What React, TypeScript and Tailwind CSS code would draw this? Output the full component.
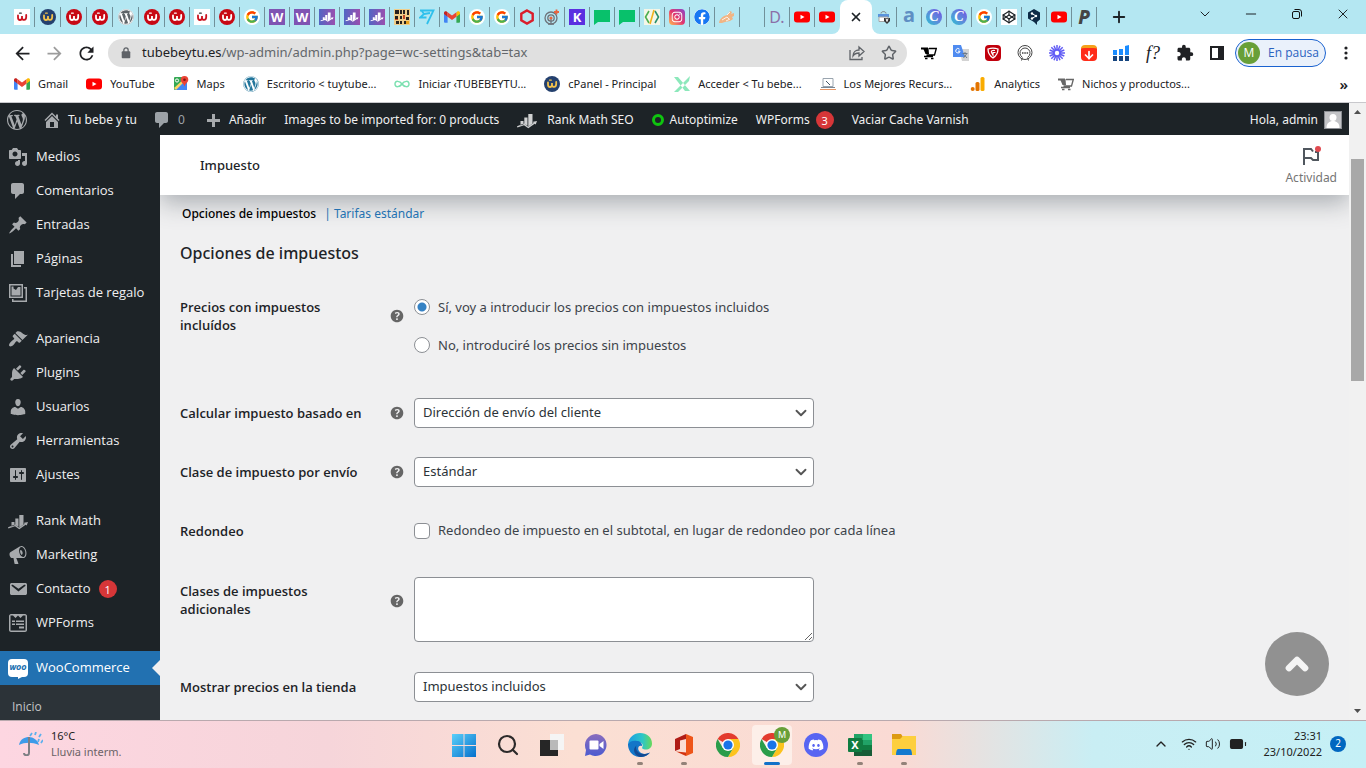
import type { ReactNode } from "react";
import { FcGoogle } from "react-icons/fc";
import { FaDiscord, FaFacebook, FaWordpress, FaInstagram } from "react-icons/fa";
import { MdArrowBack, MdArrowForward, MdExtension, MdRefresh } from "react-icons/md";
import { ArrowDown, BatteryFull, ChevronDown, ChevronUp, Codepen, Minus, Plus, Search, Star, Volume2, Wifi, X } from "lucide-react";

const dash = {
  wordpress:
    "M20 10c0-5.51-4.49-10-10-10C4.48 0 0 4.49 0 10c0 5.52 4.48 10 10 10 5.51 0 10-4.48 10-10zM7.78 15.37L4.37 6.22c.55-.02 1.17-.08 1.17-.08.5-.06.44-1.13-.06-1.11 0 0-1.45.11-2.37.11-.18 0-.37 0-.58-.01C4.12 2.69 6.87 1.11 10 1.11c2.33 0 4.45.87 6.05 2.34-.68-.11-1.65.39-1.65 1.58 0 .74.45 1.36.9 2.1.35.61.55 1.36.55 2.46 0 1.49-1.4 5-1.4 5l-3.03-8.37c.54-.02.82-.17.82-.17.5-.05.44-1.25-.06-1.22 0 0-1.44.12-2.38.12-.87 0-2.33-.12-2.33-.12-.5-.03-.56 1.2-.06 1.22l.92.08 1.26 3.41zM17.41 10c.24-.64.74-1.87.43-4.25.7 1.29 1.05 2.71 1.05 4.25 0 3.29-1.73 6.24-4.4 7.78.97-2.59 1.94-5.2 2.92-7.78zM6.1 18.09C3.12 16.65 1.11 13.53 1.11 10c0-1.3.23-2.48.72-3.59C3.25 10.3 4.67 14.2 6.1 18.09zm4.03-6.63l2.58 6.98c-.86.29-1.76.45-2.71.45-.79 0-1.57-.11-2.29-.33.81-2.38 1.62-4.74 2.42-7.1z",
  home: "M16 8.5l1.53 1.53-1.06 1.06L10 4.6l-6.47 6.49-1.06-1.06L10 2.5l4 4v-2h2v4zm-6-2.46l6 5.99V18H4v-5.97zM12 17v-5H8v5h4z",
  comments: "M5 2h9c1.1 0 2 .9 2 2v7c0 1.1-.9 2-2 2h-2l-5 5v-5H5c-1.1 0-2-.9-2-2V4c0-1.1.9-2 2-2z",
  plus: "M17 9v3h-5v5H9v-5H4V9h5V4h3v5h5z",
  media:
    "M13 11V4c0-.55-.45-1-1-1h-1.67L9 1H5L3.67 3H2c-.55 0-1 .45-1 1v7c0 .55.45 1 1 1h10c.55 0 1-.45 1-1zM7 4.5c1.38 0 2.5 1.12 2.5 2.5S8.38 9.5 7 9.5 4.5 8.38 4.5 7 5.62 4.5 7 4.5zM14 6h5v10.5c0 1.38-1.12 2.5-2.5 2.5S14 17.88 14 16.5s1.12-2.5 2.5-2.5c.17 0 .34.02.5.05V9h-3V6zm-4 8.05V13h2v3.5c0 1.38-1.12 2.5-2.5 2.5S7 17.88 7 16.5 8.12 14 9.5 14c.17 0 .34.02.5.05z",
  post: "M10.44 3.02l1.82-1.82 6.36 6.35-1.83 1.82c-1.05-.68-2.48-.57-3.41.36l-.75.75c-.92.93-1.04 2.35-.35 3.41l-1.83 1.82-2.41-2.41-2.8 2.79c-.42.42-3.38 2.71-3.8 2.29s1.86-3.39 2.28-3.81l2.79-2.79L4.1 9.36l1.83-1.82c1.05.69 2.48.57 3.4-.36l.75-.75c.93-.92 1.05-2.35.36-3.41z",
  page: "M6 15V2h10v13H6zm-1 1h8v2H3V5h2v11z",
  gallery: "M1 1h14v14H1zm1.500 1.500v11h11v-11zM3.500 3.500h2v2l2.500 1.500 2-3h2.500v8.500h-9zM16 4h3v15H4v-3h1.500v1.500h12v-12H16z",
  appearance:
    "M14.48 11.06L7.41 3.99l1.5-1.5c.5-.56 2.3-.47 3.51.32 1.21.8 1.43 1.28 2.91 2.1 1.18.64 2.45 1.26 4.45.85zm-.71.71L6.7 4.7 4.93 6.47c-.39.39-.39 1.02 0 1.41l1.06 1.06c.39.39.39 1.03 0 1.42-.6.6-1.43 1.11-2.21 1.69-.35.26-.7.53-1.01.84C1.43 14.23.4 16.08 1.4 17.07c.99 1 2.84-.03 4.18-1.36.31-.31.58-.66.85-1.02.57-.78 1.08-1.61 1.69-2.21.39-.39 1.02-.39 1.41 0l1.06 1.06c.39.39 1.02.39 1.41 0z",
  plugins:
    "M13.11 4.36L9.87 7.6 8 5.73l3.24-3.24c.35-.34 1.05-.2 1.56.32.52.51.66 1.21.31 1.55zm-8 1.77l.91-1.12 9.01 9.01-1.19.84c-.71.71-2.63 1.16-3.82 1.16H6.14L4.9 17.26c-.59.59-1.54.59-2.12 0-.59-.58-.59-1.53 0-2.12l1.24-1.24v-3.88c0-1.13.4-3.19 1.09-3.89zm7.26 3.97l3.24-3.24c.34-.35 1.04-.21 1.55.31.52.51.66 1.21.31 1.55l-3.24 3.25z",
  users:
    "M10 9.25c-2.27 0-2.73-3.44-2.73-3.44C7 4.02 7.82 2 9.97 2c2.16 0 2.98 2.02 2.71 3.81 0 0-.41 3.44-2.68 3.44zm0 2.57L12.72 10c2.39 0 4.52 2.33 4.52 4.53v2.49s-3.65 1.13-7.24 1.13c-3.65 0-7.24-1.13-7.24-1.13v-2.49c0-2.25 1.94-4.48 4.47-4.48z",
  tools:
    "M16.68 9.77c-1.34 1.34-3.3 1.67-4.95.99l-5.41 6.52c-.99.99-2.59.99-3.58 0s-.99-2.59 0-3.57l6.52-5.42c-.68-1.65-.35-3.61.99-4.95 1.28-1.28 3.12-1.62 4.72-1.06l-2.89 2.89 2.82 2.82 2.86-2.87c.53 1.58.18 3.39-1.08 4.65zM3.81 16.21c.4.39 1.04.39 1.43 0 .4-.4.4-1.04 0-1.43-.39-.4-1.03-.4-1.43 0-.39.39-.39 1.03 0 1.43z",
  settings:
    "M18 16V4c0-.55-.45-1-1-1H3c-.55 0-1 .45-1 1v12c0 .55.45 1 1 1h14c.55 0 1-.45 1-1zM8 11h1c.55 0 1 .45 1 1s-.45 1-1 1H8v1.5c0 .28-.22.5-.5.5s-.5-.22-.5-.5V13H6c-.55 0-1-.45-1-1s.45-1 1-1h1V5.5c0-.28.22-.5.5-.5s.5.22.5.5V11zm5-2h-1c-.55 0-1-.45-1-1s.45-1 1-1h1V5.500c0-.28.22-.5.5-.5s.5.22.5.5V7h1c.55 0 1 .45 1 1s-.45 1-1 1h-1v5.500c0 .28-.22.5-.5.5s-.5-.22-.5-.5V9z",
  rank: "M3.500 11h3v3.200l-3 1.400zM7.300 7.500h3.200v8.200l-3.200-1.900zM11.300 4h4.200v9.500l-4.200 2.900zM0 16.200l7-2.700 4.200 3.200 5.300-3.800-.5-1.100 4-.8-1.300 3.600-1-.9-6.400 4.500L7 15.200.4 17.400z",
  megaphone:
    "M18.150 5.940c.46 1.620.38 3.220-.02 4.480-.42 1.280-1.260 2.180-2.300 2.480-.16.06-.26.06-.4.06-.06.02-.12.02-.18.02-.06.02-.14.02-.22.02h-6.800l2.220 5.500c.02.14-.06.26-.14.34-.08.1-.24.16-.34.16H6.950c-.1 0-.26-.06-.34-.16-.08-.08-.16-.2-.14-.34l-1-5.500H4.250c-.5.06-1.080-.18-1.540-.62s-.88-1.080-1.060-1.880c-.24-.8-.2-1.560-.02-2.200.18-.62.58-1.080 1.060-1.300l9-5.400c.3-.2.6-.36.98-.46 1.040-.3 2.240.1 3.220.98s1.840 2.200 2.260 3.820zM15.570 11.900c1.500-.5 2.200-2.900 1.600-5.700-.6-2.700-2.600-4.600-4.200-4.100-1.600.4-2.300 3-1.600 5.700.7 2.700 2.600 4.600 4.200 4.100zM12.300 5c.9-.2 1.800.7 2.200 2.100s.1 2.500-.9 2.900c-.6-.6-1-1.300-1.300-2.300-.3-1-.3-1.900 0-2.700z",
  email:
    "M3.87 4h13.25C18.37 4 19 4.59 19 5.79v8.42c0 1.19-.63 1.79-1.88 1.79H3.87c-1.25 0-1.88-.6-1.88-1.79V5.79c0-1.2.63-1.79 1.88-1.79zm6.62 8.6l6.74-5.53c.24-.2.43-.66.13-1.07-.29-.41-.82-.42-1.17-.17l-5.7 3.86L4.8 5.83c-.35-.25-.88-.24-1.17.17-.3.41-.11.87.13 1.07z",
  forms:
    "M3 1h14c1 0 2 1 2 2v14c0 1-1 2-2 2H3c-1 0-2-1-2-2V3c0-1 1-2 2-2zm-.5 1.500v15h15v-15h-2.500L12.500 5 10 2.500 7.500 5 5 2.500zM4 7.500h3V9H4zM8 7.500h8V9H8zM4 10.500h3V12H4zM8 10.500h8V12H8zM11 13.500h5V15.500h-5z",
  help: "M17 10c0-3.87-3.14-7-7-7-3.87 0-7 3.13-7 7s3.13 7 7 7c3.86 0 7-3.13 7-7zm-6.3 1.48H9.14v-.43c0-.38.08-.7.24-.98s.46-.57.88-.89c.41-.29.68-.53.81-.71.14-.18.2-.39.2-.62 0-.25-.09-.44-.28-.58-.19-.13-.45-.19-.79-.19-.58 0-1.25.19-2 .57l-.64-1.28c.87-.49 1.8-.74 2.77-.74.81 0 1.45.2 1.92.58.48.39.71.91.71 1.55 0 .43-.09.8-.29 1.11-.19.32-.57.67-1.11 1.06-.38.28-.61.49-.71.63-.1.15-.15.34-.15.57v.35zm-1.47 2.74c-.18-.17-.27-.42-.27-.73 0-.33.08-.58.26-.75s.43-.25.77-.25c.32 0 .57.09.75.26s.27.42.27.74c0 .3-.09.55-.27.72-.18.18-.43.27-.75.27-.33 0-.58-.09-.76-.26z",
};

type DashName = keyof typeof dash;

function Dash({ name, className = "size-5" }: { name: DashName; className?: string }) {
  return (
    <svg viewBox="0 0 20 20" className={`shrink-0 ${className}`} fill="currentColor" fillRule="evenodd" aria-hidden="true">
      <path d={dash[name]} />
    </svg>
  );
}

/* ---------- site icons ---------- */

function Badge({ className, children }: { className: string; children: ReactNode }) {
  return <span className={`flex size-4 shrink-0 items-center justify-center leading-none ${className}`}>{children}</span>;
}

function WebMark({ dot }: { dot?: string }) {
  return (
    <svg viewBox="0 0 16 16" className="size-4" fill="none" stroke="currentColor" strokeWidth="1.800" strokeLinecap="round">
      <path d="M4 6.500v2c0 3.300 4 3.300 4 0V7v1.500c0 3.300 4.200 3.300 4.200-.5V6" />
      <path d="M5.500 4.200h1.800" stroke={dot ?? "currentColor"} strokeWidth="1.200" />
    </svg>
  );
}

const WebRed = () => (
  <Badge className="rounded-full bg-[#c80814] text-white">
    <WebMark />
  </Badge>
);
const WebNavy = () => (
  <Badge className="rounded-full bg-[#24406e] text-[#f3c14b]">
    <WebMark />
  </Badge>
);
const WebWhite = () => (
  <Badge className="bg-white text-[#cc1420]">
    <WebMark dot="#333" />
  </Badge>
);
const Elementor = () => <Badge className="bg-[#7f54b3] text-[13px] font-bold text-white">W</Badge>;
const Google = () => (
  <Badge className="rounded-full bg-white">
    <FcGoogle className="size-3.5" />
  </Badge>
);
const Youtube = () => (
  <svg viewBox="0 0 16 16" className="size-4 shrink-0">
    <rect y="2.500" width="16" height="11" rx="3" fill="#f00" />
    <path d="M6.500 5.700v4.600L10.500 8z" fill="#fff" />
  </svg>
);
const Gmail = () => (
  <svg viewBox="0 0 16 16" className="size-4 shrink-0">
    <path d="M0 4v8.500c0 .8.500 1.300 1.200 1.300h2.400V7z" fill="#4285f4" />
    <path d="M16 4v8.500c0 .8-.5 1.300-1.200 1.300h-2.400V7z" fill="#34a853" />
    <path d="M12.400 3.500V7.700L16 5V4c0-1.600-1.600-2.300-2.700-1.400z" fill="#fbbc04" />
    <path d="M0 4v1l3.600 2.700V3.500l-.9-.9C1.600 1.700 0 2.400 0 4z" fill="#c5221f" />
    <path d="M3.600 7.700V3.300L8 6.600l4.400-3.300v4.400L8 11z" fill="#ea4335" />
  </svg>
);
const RankPurple = () => (
  <svg viewBox="0 0 16 16" className="size-4">
    <defs>
      <linearGradient id="rankbg">
        <stop stopColor="#5266c4" />
        <stop offset="1" stopColor="#9a4fae" />
      </linearGradient>
    </defs>
    <rect width="16" height="16" fill="url(#rankbg)" />
    <path d={dash.rank} transform="translate(1.500 1) scale(.65)" fill="#fff" />
  </svg>
);
const Mosaic = () => (
  <svg viewBox="0 0 16 16" className="size-4">
    <rect width="16" height="16" fill="#f0ce8a" />
    <path d="M1 1h4v4H1zM6 1h2v4H6zM9 1h2v4H9zM13 1h2v5h-2zM1 7h3v3H1zM6 7h2v3H6zM12 8h3v3h-3zM2 12h3v3H2zM6 12h2v3H6zM10 12h2v3h-2z" fill="#27221f" />
    <path d="M9 6h2v4H9zM1 10h3v1H1z" fill="#c44822" />
    <path d="M12 12h3v3h-3z" fill="#e7a21e" />
  </svg>
);
const Wise = () => (
  <svg viewBox="0 0 16 16" className="size-4">
    <path d="M1 1.500h13.500L8 15M2.500 1.500 5 5 1 8.500h6.500M5 5l6-1" stroke="#2fc0ec" strokeWidth="1.800" fill="none" />
  </svg>
);
const Hexagon = () => (
  <svg viewBox="0 0 16 16" className="size-4">
    <path d="M8 1.500 13.700 4.700v6.600L8 14.500 2.300 11.300V4.700z" fill="none" stroke="#da1e2c" strokeWidth="2.400" />
  </svg>
);
const Target = () => (
  <svg viewBox="0 0 16 16" className="size-4" fill="none" stroke="#6d747b" strokeWidth="1.300">
    <circle cx="7" cy="9" r="6" />
    <circle cx="7" cy="9" r="3.200" />
    <path d="M4 15h6M7 9v5" />
    <circle cx="7" cy="9" r="1.600" fill="#e8643f" stroke="none" />
    <path d="M10 3h5M12.500.5v5" stroke="#e8643f" strokeWidth="1.800" />
  </svg>
);
const Chat = () => (
  <svg viewBox="0 0 16 16" className="size-4">
    <path d="M0 1h16v12H4l-4 3z" fill="#08c16b" />
  </svg>
);
const Brackets = () => (
  <svg viewBox="0 0 16 16" className="size-4" fill="none" strokeWidth="1.600">
    <rect width="16" height="16" fill="#f4f6e8" />
    <path d="M5 2 1.500 8 5 14" stroke="#4caf50" />
    <path d="M10 1 6 15" stroke="#f2b21b" />
    <path d="M11 2l3.500 6L11 14" stroke="#2c8f6b" />
  </svg>
);
const Insta = () => (
  <span className="flex size-4 items-center justify-center rounded-sm bg-linear-to-tr from-[#fdb74a] via-[#e1306c] to-[#8a3ac8]">
    <FaInstagram className="size-3 text-white" />
  </span>
);
const Hands = () => (
  <svg viewBox="0 0 16 16" className="size-4">
    <path d="M0 14c0-3 2-5 5-7l3-1 3-4 2 1-1 2 3-1v3l-2 1 1 2-3 2-5 1-3 1z" fill="#f1b584" />
    <path d="M8 6l3-3M3 11l5-3 2 2M7 12l4-2" stroke="#fbf1e8" fill="none" />
  </svg>
);
const Shop = () => (
  <svg viewBox="0 0 16 16" className="size-4">
    <path d="M5 4.500c0-2.500 5-2.500 5 0" stroke="#777" fill="none" />
    <path d="M2 5h11v3H2z" fill="#5a94dc" />
    <path d="M3 8h9v4.500H3z" fill="#fff" stroke="#a5a5a5" />
    <path d="M8 9h6v3l-3 3-3-3z" fill="#333" />
    <path d="M10 9.500l1 3 1-3" stroke="#fff" fill="none" />
  </svg>
);
const Canva = () => (
  <Badge className="rounded-full bg-linear-to-tr from-[#13bfd0] to-[#7048e2] font-[Liberation_Serif,serif] text-[14px] font-bold italic text-white">
    C
  </Badge>
);
const DeepL = () => (
  <svg viewBox="0 0 16 16" className="size-4">
    <path d="M8 0l6 3.500v7L11 13v3l-3-3-6-3.500v-6z" fill="#0f2b46" />
    <path d="M6 4.500l4 2.500L6 9.500" stroke="#fff" fill="none" />
    <circle cx="6" cy="4.500" r="1.200" fill="#fff" />
    <circle cx="10" cy="7" r="1.200" fill="#fff" />
    <circle cx="6" cy="9.500" r="1.200" fill="#fff" />
  </svg>
);
const Cart = ({ tone }: { tone: string }) => (
  <svg viewBox="0 0 16 16" className={`size-4 shrink-0 ${tone}`} fill="none" stroke="currentColor">
    <path d="M0 3.500h7" strokeWidth="2" />
    <path d="M2 3h5.500l.5 6H4.500z" fill="currentColor" stroke="none" />
    <path d="M8 3.500h7.300L13.500 10H5.500M3 11.500h9" strokeWidth="1.300" />
    <path d="M4 13.500h2.500M10 13.500h2.500" strokeWidth="1.500" />
  </svg>
);
const MapsPin = () => (
  <svg viewBox="0 0 16 16" className="size-4 shrink-0">
    <rect x="1" y="1" width="13" height="13" rx="1" fill="#34a853" />
    <path d="M2 14 14 3v11z" fill="#4285f4" />
    <path d="M1 12 12 2l2 1L3 14z" fill="#fdd663" />
    <circle cx="4" cy="4.500" r="1.600" fill="none" stroke="#fff" />
    <path d="M11.500 0a3.800 3.800 0 0 1 3.800 3.800c0 2.600-3 3.600-3.800 6.700-.8-3.100-3.800-4.100-3.800-6.700A3.800 3.800 0 0 1 11.500 0z" fill="#ea4335" />
    <circle cx="11.500" cy="3.800" r="1.300" fill="#811411" />
  </svg>
);
const Infinity8 = () => (
  <svg viewBox="0 0 16 16" className="size-4 shrink-0">
    <path d="M8 8c-2-3-7-4-7 0s5 3 7 0 7-4 7 0-5 3-7 0z" fill="none" stroke="#7be0b0" strokeWidth="1.500" />
  </svg>
);
const MintX = () => (
  <svg viewBox="0 0 16 16" className="size-4 shrink-0">
    <path d="M0 1h4l12 14h-5zM16 0 0 16h4L15 5z" fill="#8ce8bb" />
  </svg>
);
const Laptop = () => (
  <svg viewBox="0 0 16 16" className="size-4 shrink-0">
    <path d="M3 2.500h10v8H3z" fill="#fff" stroke="#9aa5af" />
    <path d="M1 11.500h14" stroke="#7a8894" />
    <path d="M0 13.500h16" stroke="#e79563" />
    <path d="M6 5l4 4" stroke="#456" />
  </svg>
);
const Analytics = () => (
  <svg viewBox="0 0 16 16" className="size-4 shrink-0">
    <rect x="10.500" y="1" width="4" height="14" rx="1.500" fill="#f9ab00" />
    <rect x="5.500" y="6" width="4" height="9" rx="1.500" fill="#e37400" />
    <circle cx="2.700" cy="13" r="2" fill="#e37400" />
  </svg>
);

const wideTabs = [WebWhite, WebNavy, WebRed, WebRed, () => <FaWordpress className="size-4 rounded-full bg-white text-[#5e6468]" />, WebRed];

const tabs = [
  WebRed,
  WebWhite,
  WebRed,
  Google,
  Elementor,
  Elementor,
  RankPurple,
  RankPurple,
  RankPurple,
  Mosaic,
  Wise,
  Gmail,
  Google,
  Google,
  Hexagon,
  Target,
  () => <Badge className="bg-[#5b2fe0] text-[13px] font-bold text-white">K</Badge>,
  Chat,
  Chat,
  Brackets,
  Insta,
  () => <FaFacebook className="size-4 rounded-full bg-white text-[#1877f2]" />,
  Hands,
  () => null,
  () => <Badge className="text-[16px] text-[#8b6fa8]">D.</Badge>,
  Youtube,
  Youtube,
];

const tabsAfter = [
  Shop,
  () => <Badge className="pb-1 text-[20px] font-bold text-[#5f8fc4]">a</Badge>,
  Canva,
  Canva,
  Google,
  () => (
    <Badge className="bg-white">
      <Codepen className="size-3.5" />
    </Badge>
  ),
  DeepL,
  Youtube,
  () => <Badge className="text-[19px] font-extrabold text-[#454545] italic">P</Badge>,
];

function Tab({ icon: Icon, wide, last }: { icon: () => ReactNode; wide?: boolean; last?: boolean }) {
  return (
    <button
      className={`flex h-5 shrink-0 items-center justify-center border-r ${wide ? "w-[26px]" : "w-[25px]"} ${
        last ? "border-transparent" : "border-[#71919a]"
      }`}
    >
      <Icon />
    </button>
  );
}

function TabStrip() {
  return (
    <div className="flex h-[34px] shrink-0 items-center bg-[#b4e7f2] pl-[9px]">
      {wideTabs.map((t, i) => (
        <Tab key={i} icon={t} wide />
      ))}
      {tabs.map((t, i) => (
        <Tab key={i} icon={t} last={i === tabs.length - 1} />
      ))}
      <button className="relative flex h-full w-8 shrink-0 items-center justify-center rounded-t-lg bg-white" aria-label="Cerrar pestaña">
        <span className="absolute bottom-0 -left-2 size-2 bg-white">
          <span className="block size-full rounded-br-lg bg-[#b4e7f2]" />
        </span>
        <span className="absolute -right-2 bottom-0 size-2 bg-white">
          <span className="block size-full rounded-bl-lg bg-[#b4e7f2]" />
        </span>
        <X className="size-3.5" strokeWidth={3} />
      </button>
      {tabsAfter.map((t, i) => (
        <Tab key={i} icon={t} />
      ))}
      <button className="ml-3 flex size-5 items-center justify-center" aria-label="Nueva pestaña">
        <Plus className="size-[18px]" strokeWidth={2.5} />
      </button>
      <div className="ml-auto flex h-full items-start pt-1.5">
        <button className="flex w-[46px] justify-center" aria-label="Buscar pestañas">
          <ChevronDown className="size-4" strokeWidth={1.5} />
        </button>
        <button className="flex w-[46px] justify-center" aria-label="Minimizar">
          <Minus className="size-4" strokeWidth={1.5} />
        </button>
        <button className="flex w-[46px] justify-center" aria-label="Restaurar">
          <svg viewBox="0 0 16 16" className="size-4" fill="none" stroke="#111">
            <rect x="3.500" y="5.500" width="7" height="7" rx="1.500" />
            <path d="M5.500 3.500H10a2.500 2.500 0 0 1 2.500 2.500v4.500" />
          </svg>
        </button>
        <button className="flex w-[46px] justify-center" aria-label="Cerrar">
          <X className="size-4" strokeWidth={1.5} />
        </button>
      </div>
    </div>
  );
}

const extensions: { name: string; icon: ReactNode }[] = [
  { name: "Carrito", icon: <Cart tone="text-black" /> },
  {
    name: "Traductor",
    icon: (
      <svg viewBox="0 0 16 16" className="size-4">
        <path d="M6 4h10v12H9z" fill="#d3d3d3" />
        <path d="M0 0h8l4 12H0z" fill="#4f8bf0" />
        <path d="M12 7v1M9.500 8.500h5M13.500 9l-3 4M11 9.500l3 3.500" stroke="#6c7a8a" fill="none" />
        <path d="M6.500 4.200a2.200 2.200 0 1 0 .6 2H5" stroke="#fff" fill="none" />
      </svg>
    ),
  },
  {
    name: "Protector",
    icon: (
      <svg viewBox="0 0 16 16" className="size-4">
        <rect width="16" height="16" rx="4" fill="#c1000c" />
        <path d="M3 4c4-1.500 6-1.500 10 0 0 4-2 7-5 9-3-2-5-5-5-9z" fill="none" stroke="#fff" strokeWidth="1.300" />
        <path d="M10 5.500c-3-.5-4 .5-3.500 2L8 10V7.500h2.500" fill="none" stroke="#fff" strokeWidth="1.200" />
      </svg>
    ),
  },
  {
    name: "Podcast",
    icon: (
      <svg viewBox="0 0 16 16" className="size-4" fill="none" stroke="#444">
        <circle cx="8" cy="7.500" r="7" />
        <path d="M5 12a5 5 0 1 1 6 0M5.500 12.500l-1 3M10.500 12.500l1 3" />
        <path d="M5 8h1.500M7.300 8h1.500M9.600 8h1.500" strokeWidth="1.500" />
      </svg>
    ),
  },
  {
    name: "Loom",
    icon: (
      <svg viewBox="0 0 16 16" className="size-4" stroke="#625df5">
        <path
          d="M8 0v16M0 8h16M2.300 2.300l11.400 11.400M13.700 2.300 2.300 13.700M5 .7l6 14.600M11 .7 5 15.300M.7 5l14.600 6M.7 11l14.600-6"
          strokeWidth="1.500"
        />
        <circle cx="8" cy="8" r="2.200" fill="#fff" stroke="none" />
      </svg>
    ),
  },
  {
    name: "Descargar",
    icon: (
      <span className="flex size-4 items-center justify-center rounded-sm border-t-3 border-[#f5a01a] bg-[#ff2d1a]">
        <ArrowDown className="size-3 text-white" strokeWidth={3.5} />
      </span>
    ),
  },
  {
    name: "Estadísticas",
    icon: (
      <svg viewBox="0 0 16 16" className="size-4">
        <path d="M0 5h4v5H0zM6 4h4v6H6zM12 1l4-1v10h-4z" fill="#1a8cff" />
        <path d="M0 11h4v5H0zM6 11h4v5H6zM12 11h4v5h-4z" fill="#16457f" />
      </svg>
    ),
  },
  { name: "Fuentes", icon: <span className="font-[Liberation_Serif,serif] text-[18px] leading-4 italic">f?</span> },
  { name: "Extensiones", icon: <MdExtension className="size-[18px] text-[#202124]" /> },
  {
    name: "Panel lateral",
    icon: (
      <svg viewBox="0 0 16 16" className="size-4">
        <path d="M1 1h14v14H1zm2 2v10h6V3z" fill="#202124" fillRule="evenodd" />
      </svg>
    ),
  },
];

function Toolbar() {
  return (
    <div className="flex h-9 shrink-0 items-center bg-white pt-0.5 text-[#202124]">
      <button className="flex w-8 justify-center pl-3" aria-label="Atrás">
        <MdArrowBack className="size-[21px] shrink-0" />
      </button>
      <button className="flex w-8 justify-center pl-3 text-[#9c9c9c]" aria-label="Adelante">
        <MdArrowForward className="size-[21px] shrink-0" />
      </button>
      <button className="flex w-8 justify-center pl-3" aria-label="Recargar">
        <MdRefresh className="size-[21px] shrink-0" />
      </button>
      <div className="ml-3 flex h-7 flex-1 items-center rounded-full bg-[#e0e0e0] px-3">
        <svg viewBox="0 0 12 14" className="mr-2.5 h-3 w-3" fill="#5f6368">
          <path d="M2 5h8a1 1 0 0 1 1 1v6a1 1 0 0 1-1 1H2a1 1 0 0 1-1-1V6a1 1 0 0 1 1-1z" />
          <path d="M3.500 6V3.500a2.500 2.500 0 0 1 5 0V6" fill="none" stroke="#5f6368" strokeWidth="1.500" />
        </svg>
        <p className="flex-1 text-[13px] text-[#63676b]">
          <span className="text-[#202124]">tubebeytu.es</span>/wp-admin/admin.php?page=wc-settings&amp;tab=tax
        </p>
        <button className="mr-4" aria-label="Compartir">
          <svg viewBox="0 0 16 16" className="size-4" fill="none" stroke="#5f6368" strokeWidth="1.300">
            <path d="M1 5v9.500h12V12" />
            <path d="M4 11c0-4 3-6 6-6V2l5 4.500-5 4.500V8c-3 0-4.500.5-6 3z" />
          </svg>
        </button>
        <button aria-label="Marcador" className="-mr-0.5">
          <Star className="size-4 text-[#5f6368]" strokeWidth={2.2} />
        </button>
      </div>
      <div className="ml-1.5 flex">
        {extensions.map((e) => (
          <button key={e.name} aria-label={e.name} className="flex size-8 items-center justify-center">
            {e.icon}
          </button>
        ))}
      </div>
      <button className="ml-0.5 flex h-7 w-[91px] items-center gap-2 rounded-full border border-[#1a62d0] bg-[#eaf1fb] pl-0.5 font-['Open_Sans',sans-serif] text-[12px] text-[#2a62bf]">
        <span className="flex size-[22px] items-center justify-center rounded-full bg-[#689f38] font-medium text-white">M</span>
        En pausa
      </button>
      <button className="flex w-10 justify-center" aria-label="Menú">
        <svg viewBox="0 0 4 14" className="h-3.5 w-1" fill="#202124">
          <circle cx="2" cy="2" r="1.600" />
          <circle cx="2" cy="7" r="1.600" />
          <circle cx="2" cy="12" r="1.600" />
        </svg>
      </button>
    </div>
  );
}

const bookmarks = [
  { label: "Gmail", icon: <Gmail /> },
  { label: "YouTube", icon: <Youtube /> },
  { label: "Maps", icon: <MapsPin /> },
  { label: "Escritorio < tuytube...", icon: <FaWordpress className="size-4 shrink-0 text-[#21759b]" /> },
  { label: "Iniciar ‹TUBEBEYTU...", icon: <Infinity8 /> },
  { label: "cPanel - Principal", icon: <WebNavy /> },
  { label: "Acceder < Tu bebe...", icon: <MintX /> },
  { label: "Los Mejores Recurs...", icon: <Laptop /> },
  { label: "Analytics", icon: <Analytics /> },
  { label: "Nichos y productos...", icon: <Cart tone="text-[#666]" /> },
];

function Bookmarks() {
  return (
    <nav className="flex h-[33px] shrink-0 items-center gap-[18px] border-b border-[#c8c8cc] bg-white px-3.5 pb-1 text-[11px] text-[#202124]">
      {bookmarks.map((b) => (
        <a key={b.label} href="#" className="flex shrink-0 items-center gap-2 whitespace-nowrap">
          {b.icon}
          {b.label}
        </a>
      ))}
      <button className="ml-auto pr-1 text-[15px] leading-4 font-semibold" aria-label="Más marcadores">
        »
      </button>
    </nav>
  );
}

/* ---------- wp-admin ---------- */

function Count({ children }: { children: ReactNode }) {
  return (
    <span className="flex size-[18px] items-center justify-center rounded-full bg-[#d63638] text-[11px] leading-none text-white">{children}</span>
  );
}

function AdminBar() {
  return (
    <div className="flex h-8 shrink-0 items-center gap-[18px] bg-[#1d2327] px-[7px] pt-0.5 text-[12px] whitespace-nowrap text-[#f0f0f1]">
      <div className="flex items-center gap-[15px]">
        <a href="#" aria-label="WordPress">
          <Dash name="wordpress" className="size-5 text-[#a7aaad]" />
        </a>
        <a href="#" className="flex items-center gap-1.5">
          <Dash name="home" className="size-5 text-[#a7aaad]" />
          Tu bebe y tu
        </a>
        <a href="#" className="flex items-center gap-1.5 text-[#9ca2a7]">
          <Dash name="comments" className="size-5" />0
        </a>
      </div>
      <a href="#" className="flex items-center gap-1.5">
        <Dash name="plus" className="size-5 text-[#a7aaad]" />
        Añadir
      </a>
      <a href="#">Images to be imported for: 0 products</a>
      <a href="#" className="flex items-center gap-2.5">
        <Dash name="rank" className="size-5 text-[#d0d1d2]" />
        Rank Math SEO
      </a>
      <a href="#" className="flex items-center gap-1.5">
        <span className="size-3 rounded-full border-3 border-[#0fc40f]" />
        Autoptimize
      </a>
      <a href="#" className="flex items-center gap-1.5">
        WPForms <Count>3</Count>
      </a>
      <a href="#">Vaciar Cache Varnish</a>
      <a href="#" className="ml-auto flex items-center gap-1.5">
        Hola, admin
        <svg viewBox="0 0 18 18" className="size-[18px]">
          <rect x=".5" y=".5" width="17" height="17" fill="#c3c4c7" stroke="#8c8f94" />
          <circle cx="9" cy="6.500" r="3.500" fill="#fff" />
          <path d="M2.500 17c0-5 3-7 6.500-7s6.500 2 6.500 7z" fill="#fff" />
        </svg>
      </a>
    </div>
  );
}

const menu: { label: string; icon: DashName; count?: number }[][] = [
  [
    { label: "Medios", icon: "media" },
    { label: "Comentarios", icon: "comments" },
    { label: "Entradas", icon: "post" },
    { label: "Páginas", icon: "page" },
    { label: "Tarjetas de regalo", icon: "gallery" },
  ],
  [
    { label: "Apariencia", icon: "appearance" },
    { label: "Plugins", icon: "plugins" },
    { label: "Usuarios", icon: "users" },
    { label: "Herramientas", icon: "tools" },
    { label: "Ajustes", icon: "settings" },
  ],
  [
    { label: "Rank Math", icon: "rank" },
    { label: "Marketing", icon: "megaphone" },
    { label: "Contacto", icon: "email", count: 1 },
    { label: "WPForms", icon: "forms" },
  ],
];

function Sidebar() {
  return (
    <nav className="flex w-40 shrink-0 flex-col gap-3 overflow-hidden bg-[#1d2327] pt-1 font-['Open_Sans',sans-serif] text-[13px] text-[#f0f0f1]">
      {menu.map((group, i) => (
        <ul key={i}>
          {group.map((m) => (
            <li key={m.label}>
              <a href="#" className="flex h-[34px] items-center gap-2 pt-0.5 pl-2 whitespace-nowrap">
                <Dash name={m.icon} className="size-5 text-[#a7aaad]" />
                {m.label}
                {m.count && <Count>{m.count}</Count>}
              </a>
            </li>
          ))}
        </ul>
      ))}
      <div className="flex flex-1 flex-col">
        <a href="#" className="relative flex h-[34px] shrink-0 items-center gap-2 bg-[#2271b1] pl-2 text-white">
          <span className="relative flex h-[18px] w-5 items-center justify-center rounded bg-white text-[7px] font-extrabold text-[#2271b1] italic">
            WOO
            <span className="absolute top-full left-2.5 border-4 border-y-2 border-l-0 border-transparent border-t-white" />
          </span>
          WooCommerce
          <span className="absolute top-1/2 right-0 -mt-2 border-8 border-l-0 border-transparent border-r-[#f0f0f1]" />
        </a>
        <div className="flex-1 bg-[#2c3338] pt-3 pl-3">
          <a href="#" className="text-[12px] text-[#c3c4c7]">
            Inicio
          </a>
        </div>
      </div>
    </nav>
  );
}

function Row({ label, id, help, align = "items-center", children }: { label: string; id?: string; help?: boolean; align?: string; children: ReactNode }) {
  return (
    <div className={`flex ${align}`}>
      <div className="w-[210px] shrink-0 pr-3 font-['Open_Sans',sans-serif] leading-[18px] font-semibold text-[#1d2327]">
        {id ? <label htmlFor={id}>{label}</label> : <span>{label}</span>}
      </div>
      <div className="flex w-6 shrink-0">{help && <Dash name="help" className="-ml-0.5 size-[18px] text-[#666]" />}</div>
      {children}
    </div>
  );
}

function Select({ id, value }: { id: string; value: string }) {
  return (
    <div className="relative w-full max-w-[400px]">
      <select
        id={id}
        className="block h-[30px] w-full appearance-none rounded border border-[#8c8f94] bg-white pr-6 pl-2 text-[13px] text-[#2c3338]"
      >
        <option>{value}</option>
      </select>
      <ChevronDown className="pointer-events-none absolute top-1.5 right-1 size-[18px] text-[#555]" strokeWidth={2.5} />
    </div>
  );
}

const radioClass =
  "size-4 shrink-0 appearance-none rounded-full border border-[#8c8f94] bg-white checked:bg-radial checked:from-[#3582c4] checked:from-[4px] checked:to-white checked:to-[5px]";

function Settings() {
  return (
    <main className="relative flex min-w-0 flex-1 flex-col overflow-hidden bg-[#f0f0f1]">
      <header className="flex h-[60px] shrink-0 items-center justify-between bg-white pt-0.5 pr-3 pl-10 shadow-[0_8px_24px_rgba(85,93,102,0.45)]">
        <h1 className="text-[13px] font-medium text-[#1d2327]">Impuesto</h1>
        <button className="flex flex-col items-center gap-1 text-[12px] leading-4 text-[#757575]">
          <span className="relative">
            <svg viewBox="0 0 20 20" className="size-5" fill="none" stroke="#50575e" strokeWidth="2">
              <path d="M3 19V3h7l2 2.500M3 12h7l2 2h5V6h-3" />
            </svg>
            <span className="absolute top-0 right-0 size-1.5 rounded-full bg-[#e04a50]" />
          </span>
          Actividad
        </button>
      </header>

      <div className="px-5 pt-[11px]">
        <ul className="flex gap-2 pl-0.5 text-[12px] leading-4">
          <li>
            <a href="#" className="font-medium text-black">
              Opciones de impuestos
            </a>
          </li>
          <li className="text-[#2271b1]">
            | <a href="#">Tarifas estándar</a>
          </li>
        </ul>
        <h2 className="mt-[19px] text-[16px] leading-6 font-medium text-[#1d2327]">Opciones de impuestos</h2>

        <form className="flex flex-col gap-[29px] pt-[33px] text-[13px] text-[#3c434a]">
          <div className="pb-[15px]">
            <Row label="Precios con impuestos incluídos" help align="items-start [&>div:nth-child(2)]:mt-[9px]">
              <div className="flex flex-col gap-5 leading-[18px]">
                <label className="flex items-center gap-2">
                  <input type="radio" name="prices" defaultChecked className={radioClass} />
                  Sí, voy a introducir los precios con impuestos incluidos
                </label>
                <label className="flex items-center gap-2">
                  <input type="radio" name="prices" className={radioClass} />
                  No, introduciré los precios sin impuestos
                </label>
              </div>
            </Row>
          </div>
          <Row label="Calcular impuesto basado en" id="based" help>
            <Select id="based" value="Dirección de envío del cliente" />
          </Row>
          <Row label="Clase de impuesto por envío" id="shipping" help>
            <Select id="shipping" value="Estándar" />
          </Row>
          <Row label="Redondeo">
            <label className="flex h-[30px] items-center gap-2">
              <input type="checkbox" className="size-4 shrink-0 appearance-none rounded border border-[#8c8f94] bg-white" />
              Redondeo de impuesto en el subtotal, en lugar de redondeo por cada línea
            </label>
          </Row>
          <div className="pt-0.5 pb-px">
            <Row label="Clases de impuestos adicionales" id="classes" help align="items-start [&>div]:mt-[5px] [&>div:nth-child(2)]:mt-[15px]">
              <textarea id="classes" className="block h-[65px] w-full max-w-[400px] rounded border border-[#8c8f94] bg-white px-2" />
            </Row>
          </div>
          <Row label="Mostrar precios en la tienda" id="display">
            <Select id="display" value="Impuestos incluidos" />
          </Row>
        </form>
      </div>

      <button className="absolute right-5 bottom-6 flex size-16 items-center justify-center rounded-full bg-[#919191]" aria-label="Subir">
        <ChevronUp className="size-8 text-[#f5f5f5]" strokeWidth={5} />
      </button>
    </main>
  );
}

function Scrollbar() {
  return (
    <div className="flex w-[17px] shrink-0 flex-col items-center bg-[#f1f1f1]">
      <svg viewBox="0 0 17 17" className="size-[17px]">
        <path d="M5 11l3.500-4 3.500 4z" fill="#505050" />
      </svg>
      <div className="mt-[39px] h-[222px] w-[13px] bg-[#a8a8a8]" />
      <svg viewBox="0 0 17 17" className="mt-auto size-[17px]">
        <path d="M5 6l3.500 4L12 6z" fill="#505050" />
      </svg>
    </div>
  );
}

/* ---------- taskbar ---------- */

const Chrome = () => (
  <svg viewBox="0 0 24 24" className="size-6">
    <path d="M12 12 1.600 6A12 12 0 0 1 22.400 6z" fill="#e33b2e" />
    <path d="M12 6h10.400A12 12 0 0 1 12 24l5.200-9z" fill="#fcc31e" />
    <path d="M6.800 15 1.600 6A12 12 0 0 0 12 24l5.200-9z" fill="#2a9d4a" />
    <circle cx="12" cy="12" r="6" fill="#fff" />
    <circle cx="12" cy="12" r="4.600" fill="#1a73e8" />
  </svg>
);

const apps: { name: string; icon: ReactNode; open?: boolean; active?: boolean }[] = [
  {
    name: "Inicio",
    icon: (
      <svg viewBox="0 0 24 24" className="size-6">
        <defs>
          <linearGradient id="win" x2="1" y2="1">
            <stop stopColor="#5bd0fa" />
            <stop offset="1" stopColor="#0670cc" />
          </linearGradient>
        </defs>
        <path d="M0 1h11.500v11H0zM12.500 1H24v11H12.500zM0 13h11.500v11H0zM12.500 13H24v11H12.500z" fill="url(#win)" />
      </svg>
    ),
  },
  { name: "Buscar", icon: <Search className="size-6 text-[#2c2a2a]" strokeWidth={2.2} /> },
  {
    name: "Vista de tareas",
    icon: (
      <svg viewBox="0 0 24 24" className="size-6">
        <path d="M0 7h18v16H0z" fill="#262626" />
        <path d="M10 1h14v16H10z" fill="#f5f5f5" />
        <path d="M10 7h8v10h-8z" fill="#b9b9b9" />
      </svg>
    ),
  },
  {
    name: "Chat",
    icon: (
      <svg viewBox="0 0 24 24" className="size-6">
        <defs>
          <linearGradient id="teams" x2="0" y2="1">
            <stop stopColor="#8a6dbd" />
            <stop offset="1" stopColor="#4c5bd0" />
          </linearGradient>
        </defs>
        <path d="M12 1a11 11 0 1 1-6 20.500L1 23l1-6A11.300 11.300 0 0 1 12 1z" fill="url(#teams)" />
        <rect x="5.500" y="7.500" width="9" height="9" rx="1" fill="#fff" />
        <path d="M15.500 11l4-3v8l-4-3z" fill="#fff" />
      </svg>
    ),
  },
  {
    name: "Edge",
    open: true,
    icon: (
      <svg viewBox="0 0 24 24" className="size-6">
        <defs>
          <linearGradient id="edge" x2="1">
            <stop stopColor="#1b9de2" />
            <stop offset=".6" stopColor="#2dc6c8" />
            <stop offset="1" stopColor="#67d959" />
          </linearGradient>
        </defs>
        <path d="M0 11C1 4 6 0 12 0c7 0 12 4.500 12 10.500 0 4-3 6-6 6-3.500 0-4.500-1.200-3.500-3 1-2-1-4.500-4-4.500C6.500 9 2 10 0 11z" fill="url(#edge)" />
        <path d="M0 11c2-3 6-4 9-3 3 0 5.500 2.500 5 5-3-1.500-5 2-3 5s6.500 4 11 1.500C18 26 4 26 .8 16A13 13 0 0 1 0 11z" fill="#1376c8" />
        <path d="M8 14c0 6 6 9 14 5.500-3 4-9 5.500-12.500 3.500C5 20 5 15 9 12c-.6.600-1 1.200-1 2z" fill="#134a93" />
      </svg>
    ),
  },
  {
    name: "Office",
    open: true,
    icon: (
      <svg viewBox="0 0 24 24" className="size-6">
        <path d="M14 1l7 3v16l-7 3z" fill="#ee5519" />
        <path d="M3 6 14 1v5L8 7.500V16l-5 2z" fill="#b01c16" />
        <path d="M4 18.500l10 1V23z" fill="#d3330f" />
      </svg>
    ),
  },
  { name: "Chrome", icon: <Chrome /> },
  {
    name: "Chrome, perfil M",
    active: true,
    icon: (
      <>
        <Chrome />
        <span className="absolute top-0.5 right-0.5 flex size-4 items-center justify-center rounded-full bg-[#689f38] text-[9px] text-white">M</span>
      </>
    ),
  },
  {
    name: "Discord",
    icon: (
      <span className="flex size-6 items-center justify-center rounded-full bg-[#5865f2]">
        <FaDiscord className="size-4 text-white" />
      </span>
    ),
  },
  {
    name: "Excel",
    open: true,
    icon: (
      <span className="relative">
        <svg viewBox="0 0 24 24" className="size-6">
          <path d="M6 1h9v6H6z" fill="#21a366" />
          <path d="M15 1h9v6h-9z" fill="#33c481" />
          <path d="M6 7h9v10H6z" fill="#107c41" />
          <path d="M15 7h9v5h-9z" fill="#21a366" />
          <path d="M15 12h9v5h-9z" fill="#107c41" />
          <path d="M6 17h18v6H6z" fill="#185c37" />
          <rect y="5" width="14" height="14" rx="1" fill="#107c41" />
        </svg>
        <span className="absolute top-[5px] left-0 flex size-3.5 items-center justify-center text-[11px] leading-none font-bold text-white">X</span>
      </span>
    ),
  },
  {
    name: "Explorador",
    open: true,
    icon: (
      <svg viewBox="0 0 24 24" className="size-6">
        <path d="M0 1h9l2 3-2 2H0z" fill="#dd9a12" />
        <path d="M0 6h8l3-3h13v19H0z" fill="#fdcf3e" />
        <path d="M4 22c0-4 1-6 2-6h12c1 0 2 2 2 6z" fill="#1479cf" />
      </svg>
    ),
  },
];

function Taskbar() {
  return (
    <footer className="grid h-12 shrink-0 grid-cols-[1fr_auto_1fr] items-center border-t border-[#b9a9ae] bg-[linear-gradient(90deg,#fdd6e1_0%,#f6d5da_24%,#fbdfd3_42%,#fadad4_66%,#c9eef4_80%,#c5f0f6_100%)] text-[11px] text-[#222]">
      <div className="flex items-center gap-2 pb-0.5 pl-[19px] leading-4">
        <svg viewBox="0 0 24 24" className="size-6">
          <path d="M0 13C1 7 6 5 10 5s9 3 10 8c-7-3-14-3-20 0z" fill="#3d9be9" />
          <path d="M10 5v16c0 3-5 3-5 0" fill="none" stroke="#7d7f84" strokeWidth="2" />
          <path d="M13 1l-2 3M17 0l-1 3M22 2l-2 3M20 7l-1 3M24 8l-2 3" stroke="#5cb0ee" strokeWidth="1.800" />
        </svg>
        <div>
          <p>16°C</p>
          <p className="text-[#6b6367]">Lluvia interm.</p>
        </div>
      </div>
      <div className="flex gap-1 pl-0.5">
        {apps.map((a) => (
          <button
            key={a.name}
            aria-label={a.name}
            className={`relative flex size-10 items-center justify-center rounded ${a.active ? "bg-[#fdefe9]" : ""}`}
          >
            {a.icon}
            {a.open && <span className="absolute bottom-0 h-[3px] w-1.5 rounded-full bg-[#938279]" />}
            {a.active && <span className="absolute bottom-0 h-[3px] w-4 rounded-full bg-[#1271c8]" />}
          </button>
        ))}
      </div>
      <div className="flex items-center justify-end pr-5 pb-0.5">
        <ChevronUp className="mr-3 size-4" strokeWidth={2} />
        <Wifi className="mr-2 size-4" strokeWidth={2} />
        <Volume2 className="mr-2 size-4" strokeWidth={1.5} />
        <BatteryFull className="mr-4 size-[18px] fill-[#222]" strokeWidth={1.5} />
        <div className="mr-2 text-right leading-4">
          <p>23:31</p>
          <p>23/10/2022</p>
        </div>
        <span className="flex size-4 items-center justify-center rounded-full bg-[#0067c0] text-[10px] text-white">2</span>
      </div>
    </footer>
  );
}

export default function App() {
  return (
    <div className="flex h-screen flex-col overflow-hidden font-['Noto_Sans',sans-serif] text-[#1d2327]">
      <TabStrip />
      <Toolbar />
      <Bookmarks />
      <div className="flex min-h-0 flex-1">
        <div className="flex min-w-0 flex-1 flex-col">
          <AdminBar />
          <div className="flex min-h-0 flex-1">
            <Sidebar />
            <Settings />
          </div>
        </div>
        <Scrollbar />
      </div>
      <Taskbar />
    </div>
  );
}
